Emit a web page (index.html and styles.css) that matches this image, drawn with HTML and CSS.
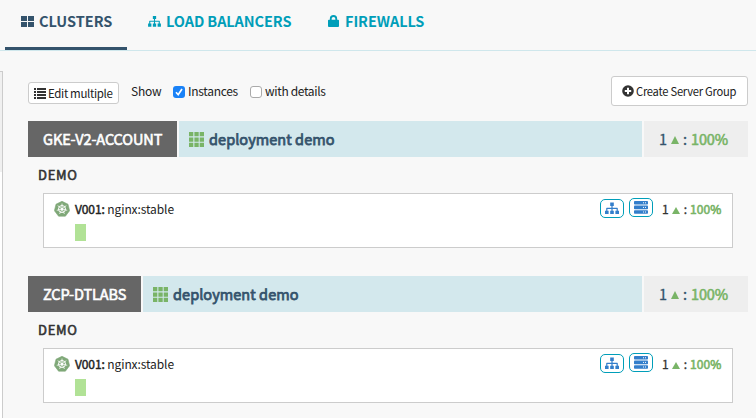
FILE: index.html
```html
<!DOCTYPE html>
<html lang="en">
<head>
<meta charset="utf-8">
<title>Clusters</title>
<link rel="stylesheet" href="styles.css">
</head>
<body>
<svg class="defs" width="0" height="0">
  <symbol id="kube" viewBox="0 0 16 16">
    <path fill="#7fa878" d="M8 .3 14 3.2 15.6 9.7 11.4 15.2H4.6L.4 9.7 2 3.2z" stroke="#7fa878" stroke-width=".6" stroke-linejoin="round"/>
    <g fill="none" stroke="#fff" stroke-width="1"><circle cx="8" cy="8" r="3.5"/>
    <path stroke-width=".8" d="M8 8V2.6M8 8l4.3-3.4M8 8l5.2 1.3M8 8l2.4 4.9M8 8l-2.4 4.9M8 8l-5.2 1.3M8 8 3.7 4.6"/></g>
    <circle cx="8" cy="8" r="1.2" fill="#fff"/>
  </symbol>
  <symbol id="tree" viewBox="0 0 14 12">
    <path fill="currentColor" d="M5.2 0h3.6v3.4H7.6v1.8h4.6q.6 0 .6.6v2.4H14v3.4h-3.6V8.2h1.2V6.4h-4v1.8h1.2v3.4H5.200V8.200h1.200V6.400h-4v1.800h1.200v3.400H0V8.200h1.200V5.800q0-.6.6-.6h4.600V3.400H5.200z"/>
  </symbol>
  <symbol id="servers" viewBox="0 0 14 13">
    <g fill="#337ecb"><rect width="14" height="3.600" rx=".8"/><rect y="4.600" width="14" height="3.600" rx=".8"/><rect y="9.200" width="14" height="3.600" rx=".8"/></g>
    <path stroke="#fff" stroke-width="1" stroke-dasharray="1 1" d="M9 1.800h4M9 6.400h4M9 11h4"/>
  </symbol>
  <symbol id="grid" viewBox="0 0 15 15">
    <path fill="#79b467" d="M0 0h4.300v4.300H0zM5.400 0h4.300v4.300H5.400zM10.700 0H15v4.300h-4.300zM0 5.400h4.300v4.300H0zM5.400 5.400h4.300v4.300H5.400zM10.700 5.400H15v4.300h-4.300zM0 10.700h4.300V15H0zM5.400 10.700h4.300V15H5.400zM10.700 10.700H15V15h-4.300z"/>
  </symbol>
</svg>
<nav class="tabs">
  <a class="tab active"><svg width="13" height="11" viewBox="0 0 13 11"><path fill="currentColor" d="M0 0h6v5H0zM7 0h6v5H7zM0 6h6v5H0zM7 6h6v5H7z"/></svg><span class="t1">CLUSTERS</span></a>
  <a class="tab lb"><svg width="13" height="11"><use href="#tree"/></svg><span class="t2">LOAD BALANCERS</span></a>
  <a class="tab fw"><svg width="11" height="12" viewBox="0 0 12 13"><path fill="currentColor" d="M1 5h1V4a4 4 0 0 1 8 0v1h1q1 0 1 1v6q0 1-1 1H1q-1 0-1-1V6q0-1 1-1zm3 0h4V4a2 2 0 0 0-4 0z"/></svg><span class="t3">FIREWALLS</span></a>
</nav>
<main class="main">
  <div class="rail"></div>
  <section class="content">
    <div class="toolbar">
      <button class="btn edit"><svg width="12" height="11" viewBox="0 0 12 11"><path fill="#333" d="M0 0h2v2H0zM3 0h9v2H3zM0 3h2v2H0zM3 3h9v2H3zM0 6h2v2H0zM3 6h9v2H3zM0 9h2v2H0zM3 9h9v2H3z"/></svg><span class="em">Edit multiple</span></button>
      <span class="show">Show</span>
      <span class="check on"><svg width="12" height="12" viewBox="0 0 12 12"><path fill="none" stroke="#fff" stroke-width="1.700" d="m3 6.200 2.200 2.500L9 3"/></svg></span><span class="inst">Instances</span>
      <span class="check off"></span><span class="wd">with details</span>
      <button class="btn create"><svg width="12" height="12" viewBox="0 0 12 12"><circle cx="6" cy="6" r="5.800" fill="#333"/><path stroke="#fff" stroke-width="2" d="M6 2.800v6.400M2.800 6h6.400"/></svg><span class="csg">Create Server Group</span></button>
    </div>
    <article class="cluster">
      <header class="bar"><div class="account gke"><span>GKE-V2-ACCOUNT</span></div><div class="name"><svg width="15" height="15"><use href="#grid"/></svg><span class="dd">deployment demo</span></div><div class="health"><span class="n">1</span><i class="up"></i><span class="c">:</span><b>100%</b></div></header>
      <h6 class="region">DEMO</h6>
      <div class="group"><div class="line"><svg class="k" width="16" height="16"><use href="#kube"/></svg><span class="ver"><b>V001:</b> nginx:stable</span><span class="pill p1"><svg width="14" height="13"><use href="#tree"/></svg></span><span class="pill p2"><svg width="14" height="13"><use href="#servers"/></svg></span><div class="mini"><span class="n">1</span><i class="up"></i><span class="c">:</span><b>100%</b></div></div><div class="instance"></div></div>
    </article>
    <article class="cluster">
      <header class="bar"><div class="account zcp"><span>ZCP-DTLABS</span></div><div class="name"><svg width="15" height="15"><use href="#grid"/></svg><span class="dd">deployment demo</span></div><div class="health"><span class="n">1</span><i class="up"></i><span class="c">:</span><b>100%</b></div></header>
      <h6 class="region">DEMO</h6>
      <div class="group"><div class="line"><svg class="k" width="16" height="16"><use href="#kube"/></svg><span class="ver"><b>V001:</b> nginx:stable</span><span class="pill p1"><svg width="14" height="13"><use href="#tree"/></svg></span><span class="pill p2"><svg width="14" height="13"><use href="#servers"/></svg></span><div class="mini"><span class="n">1</span><i class="up"></i><span class="c">:</span><b>100%</b></div></div><div class="instance"></div></div>
    </article>
  </section>
</main>
</body>
</html>
```

FILE: styles.css
```css
* { box-sizing: border-box; }
body { margin: 0; height: 418px; overflow: hidden; background: #f8f8f8; color: #222; font: 12px/18px "Noto Sans CJK SC", sans-serif; display: flex; flex-direction: column; }
span, b { white-space: nowrap; }
svg { flex: none; display: block; }
.defs { position: absolute; }
.tabs { flex: none; height: 51px; border-bottom: 1px solid #cfe7ec; display: flex; padding-left: 5px; }
.tab { display: flex; align-items: center; height: 50px; padding-bottom: 8px; color: #009eb9; font-size: 14.500px; font-weight: 700; letter-spacing: -.08px; }
.active { width: 122px; padding: 0 0 5px 16px; border-bottom: 3px solid #34536c; color: #34536c; letter-spacing: 0; }
.tab span { line-height: 20px; }
.t1 { margin-left: 5px; }
.lb { margin-left: 21px; width: 180px; }
.t2 { margin-left: 5px; }
.t3 { margin-left: 6px; }
.main { flex: 1; display: flex; }
.rail { flex: none; width: 3px; margin-top: 20px; border: solid #ccc; border-width: 1px 1px 0 0; background: linear-gradient(#f0f0f0 100px, #fff 100px); }
.content { width: 720px; margin-left: 25px; }
.toolbar { height: 70px; display: flex; padding-top: 25px; letter-spacing: -.3px; }
.btn { font: inherit; color: #222; background: #fff; border: 1px solid #ccc; border-radius: 3px; display: flex; align-items: center; padding: 0; }
.edit { width: 91px; height: 22px; margin-top: 6px; padding-left: 5px; font-size: 11.500px; letter-spacing: -.35px; }
.em { margin-left: 2px; }
.show { margin: 6px 0 0 12px; width: 42px; letter-spacing: -.2px; }
.check { flex: none; width: 12px; height: 12px; border-radius: 3px; margin-top: 10px; }
.on { background: #1a82f7; }
.off { border: 1px solid #aaa; background: #fff; }
.inst { width: 62px; margin: 6px 0 0 3px; }
.wd { margin: 6px 0 0 3px; letter-spacing: -.35px; }
.create { width: 137px; height: 30px; margin-left: auto; padding: 0 0 1px 10px; font-size: 11.200px; letter-spacing: -.25px; }
.csg { margin-left: 2px; }
.cluster { height: 155px; }
.bar { height: 36px; display: flex; gap: 2px; font-size: 14.500px; line-height: 20px; }
.bar > div { display: flex; align-items: center; }
.account { background: #666; color: #fff; padding: 0 0 0 15px; -webkit-text-stroke: .6px; }
.gke { width: 149px; letter-spacing: -.1px; }
.zcp { width: 113px; letter-spacing: -.1px; }
.name { flex: 1; background: #d3e8ed; color: #34536c; padding-left: 10px; -webkit-text-stroke: .75px; letter-spacing: .06px; }
.dd { margin-left: 5px; }
.health { width: 104px; background: #eee; color: #34536c; padding-left: 15px; }
.n, .c { -webkit-text-stroke: .3px; }
.health b, .mini b { color: #79b467; font-weight: 400; -webkit-text-stroke: .6px; }
.health b { margin-left: 4px; letter-spacing: -.2px; }
.mini b { margin-left: 3px; letter-spacing: .1px; }
.up { border: solid transparent; border-width: 0 4.500px 8px; border-bottom-color: #79b467; margin: 2px 4px 0 4px; }
.mini .up { border-width: 0 4px 7px; margin: 2px 4px 0 3px; }
.region { margin: 8px 0 0 10px; font-size: 13px; line-height: 20px; color: #333; font-weight: 400; -webkit-text-stroke: .6px; letter-spacing: .7px; }
.group { margin: 8px 15px 0; height: 55px; border: 1px solid #ccc; background: #fff; }
.line { height: 30px; display: flex; padding: 0 10px; }
.k { margin-top: 7px; }
.ver { margin: 6px 0 0 5px; letter-spacing: -.1px; }
.ver b { font-weight: 400; -webkit-text-stroke: .45px; }
.pill { width: 24px; height: 19px; border: 1px solid #009eb9; border-radius: 5px; color: #337ecb; display: flex; align-items: center; justify-content: center; }
.p1 { margin: 5px 5px 0 auto; }
.p2 { margin: 4px 9px 0 0; }
.mini { display: flex; align-items: center; height: 18px; margin-top: 6px; width: 60px; color: #333; }
.instance { width: 11px; height: 17px; margin-left: 31px; background: #b1e296; }
```
